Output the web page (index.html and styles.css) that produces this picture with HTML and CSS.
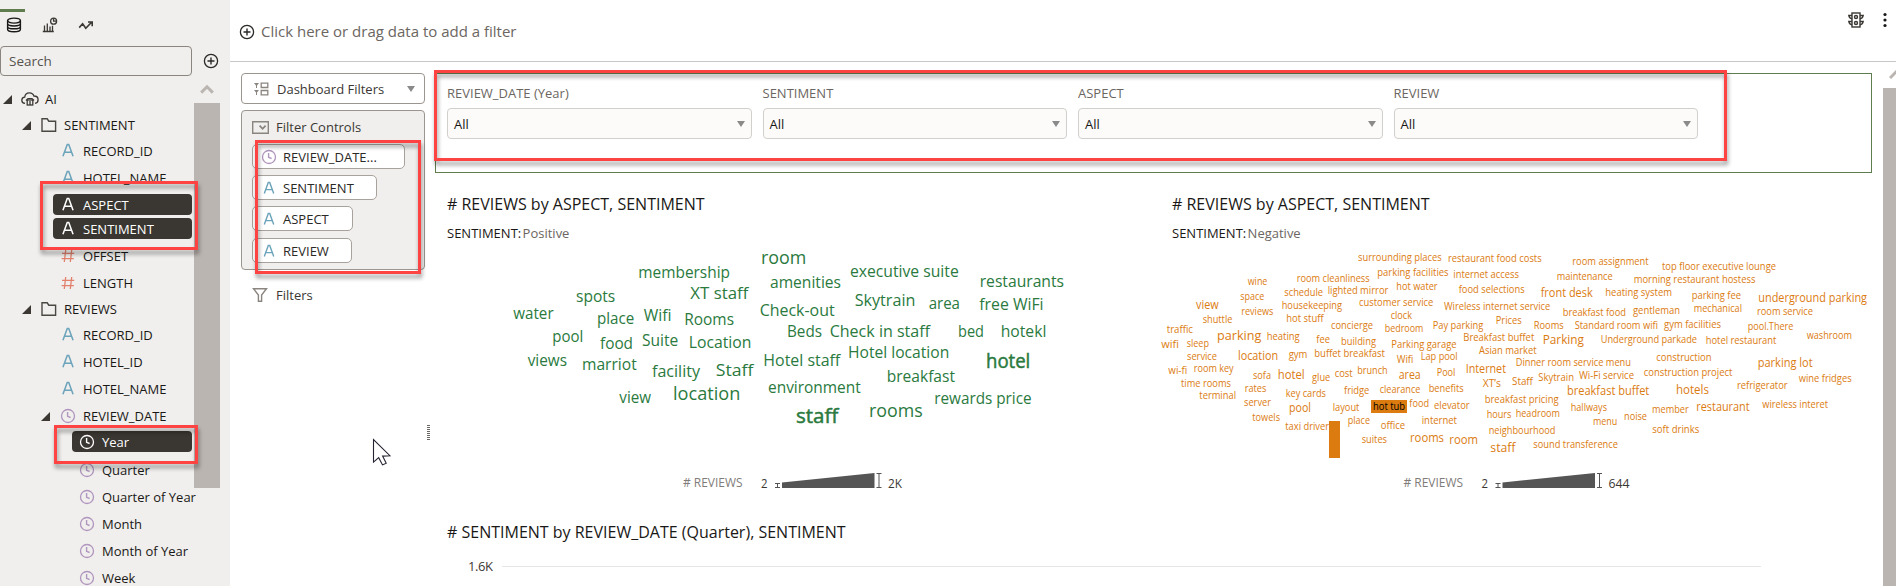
FILE: index.html
```
<!DOCTYPE html>
<html lang="en">
<head>
<meta charset="utf-8">
<title>Dashboard</title>
<link rel="stylesheet" href="styles.css">
</head>
<body>
<svg class="defs" width="0" height="0">
  <symbol id="text" viewBox="0 0 14 16"><path d="M1.6 14.2 6.2 1.6h1.6l4.6 12.6M3.6 9.8h6.8" fill="none" stroke="currentColor" stroke-width="1.6"/></symbol>
  <symbol id="hash" viewBox="0 0 14 14"><path d="M4.7 1 3.3 13M10.7 1 9.3 13M1 4.4h12.2M.6 9.6h12.2" fill="none" stroke="currentColor" stroke-width="1.3"/></symbol>
  <symbol id="clock" viewBox="0 0 16 16"><circle cx="8" cy="8" r="6.5" fill="none" stroke="currentColor" stroke-width="1.3"/><path d="M7.6 4v4.3l3 1.2" fill="none" stroke="currentColor" stroke-width="1.4"/></symbol>
  <symbol id="folder" viewBox="0 0 16 16"><path d="M1 14.2V1.8h5.2l1.6 2.4H14.6v10z" fill="none" stroke="currentColor" stroke-width="1.4"/></symbol>
  <symbol id="plus" viewBox="0 0 16 16"><circle cx="8" cy="8" r="6.6" fill="none" stroke="currentColor" stroke-width="1.3"/><path d="M8 4.5v7M4.5 8h7" stroke="currentColor" stroke-width="1.4"/></symbol>
  <symbol id="open" viewBox="0 0 9 9"><path d="M9 0v9H0z" fill="currentColor"/></symbol>
</svg>

<div class="app">
  <aside class="side">
    <div class="tabs">
      <svg width="16" height="16" viewBox="0 0 16 16" fill="none" stroke="#1a1816" stroke-width="1.4"><ellipse cx="8" cy="3.6" rx="6.4" ry="2.5"/><path d="M1.6 3.6v8.6c0 1.4 2.8 2.5 6.4 2.5s6.4-1.1 6.4-2.5V3.6M1.6 6.6c0 1.3 2.8 2.4 6.4 2.4s6.4-1.1 6.4-2.4M1.6 9.4c0 1.3 2.8 2.4 6.4 2.4s6.4-1.1 6.4-2.4"/></svg>
      <svg width="16" height="16" viewBox="0 0 16 16" fill="none" stroke="#3b3834" stroke-width="1.3"><path d="M.8 14.5h11M2.5 14V8.6M5.3 14V6.4M8 14V9.6M10.5 14V8.8"/><circle cx="11.6" cy="4.2" r="3"/><path d="M11.6 1.5v2.7h2.7"/></svg>
      <svg width="16" height="16" viewBox="0 0 16 16" fill="none" stroke="#3b3834" stroke-width="1.6"><path d="M1.2 10.6 4.6 6.8l3.2 4.4 6-6.2M10 5h4.2v4.2"/></svg>
    </div>
    <div class="searchrow"><div class="search">Search</div><svg class="plus" width="16" height="16"><use href="#plus"/></svg></div>
    <div class="treewrap">
      <ul class="tree">
        <li class="r l0"><svg class="tri"><use href="#open"/></svg><svg class="cloud" width="18" height="14" viewBox="0 0 18 14" fill="none" stroke="#3b3834" stroke-width="1.3"><path d="M4 11.4C1.9 11.2.8 9.9.8 8.200C.8 6.600 2 5.300 3.700 5.200 4 2.600 6 .900 8.400.9c2.200 0 3.900 1.200 4.500 3.100 2.500 0 4.200 1.700 4.200 3.800 0 1.900-1.200 3.300-3.100 3.600"/><rect x="6.200" y="8" width="5.600" height="5" /><path d="M5 8.500 7 6.600h4l2 1.900M9 9v4" /></svg><span>AI</span></li>
        <li class="r l1"><svg class="tri"><use href="#open"/></svg><svg class="ic"><use href="#folder"/></svg><span>SENTIMENT</span></li>
        <li class="r l2 a"><svg class="ic"><use href="#text"/></svg><span>RECORD_ID</span></li>
        <li class="r l2 a"><svg class="ic"><use href="#text"/></svg><span>HOTEL_NAME</span></li>
        <li class="r l2 a on"><svg class="ic"><use href="#text"/></svg><span>ASPECT</span></li>
        <li class="r l2 a on"><svg class="ic"><use href="#text"/></svg><span>SENTIMENT</span></li>
        <li class="r l2 n"><svg class="ic"><use href="#hash"/></svg><span>OFFSET</span></li>
        <li class="r l2 n"><svg class="ic"><use href="#hash"/></svg><span>LENGTH</span></li>
        <li class="r l1"><svg class="tri"><use href="#open"/></svg><svg class="ic"><use href="#folder"/></svg><span>REVIEWS</span></li>
        <li class="r l2 a"><svg class="ic"><use href="#text"/></svg><span>RECORD_ID</span></li>
        <li class="r l2 a"><svg class="ic"><use href="#text"/></svg><span>HOTEL_ID</span></li>
        <li class="r l2 a"><svg class="ic"><use href="#text"/></svg><span>HOTEL_NAME</span></li>
        <li class="r l2 d parent"><svg class="tri"><use href="#open"/></svg><svg class="ic"><use href="#clock"/></svg><span>REVIEW_DATE</span></li>
        <li class="r l3 d on"><svg class="ic"><use href="#clock"/></svg><span>Year</span></li>
        <li class="r l3 d"><svg class="ic"><use href="#clock"/></svg><span>Quarter</span></li>
        <li class="r l3 d"><svg class="ic"><use href="#clock"/></svg><span>Quarter of Year</span></li>
        <li class="r l3 d"><svg class="ic"><use href="#clock"/></svg><span>Month</span></li>
        <li class="r l3 d"><svg class="ic"><use href="#clock"/></svg><span>Month of Year</span></li>
        <li class="r l3 d"><svg class="ic"><use href="#clock"/></svg><span>Week</span></li>
      </ul>
      <div class="sbar"><svg width="14" height="10" viewBox="0 0 14 10"><path d="M1.200 8.600 7 2.800l5.800 5.800" fill="none" stroke="#bbb5b1" stroke-width="3"/></svg><div class="thumb"></div></div>
    </div>
  </aside>

  <main class="main">
    <header class="bar">
      <svg class="plus" width="16" height="16"><use href="#plus"/></svg><span class="hint">Click here or drag data to add a filter</span>
      <svg class="light" width="16" height="16" viewBox="0 0 16 16" fill="none" stroke="#3b3834" stroke-width="1.400"><rect x="4" y="1" width="8" height="14"/><circle cx="8" cy="5" r="1.500"/><circle cx="8" cy="11" r="1.500"/><path d="M4 3.500H.8c.3 2 1.400 3 3.200 3.200M4 9.500H.8c.3 2 1.400 3 3.200 3.200M12 3.500h3.200c-.3 2-1.400 3-3.200 3.200M12 9.500h3.200c-.3 2-1.400 3-3.200 3.200"/></svg>
      <svg class="dots" width="4" height="16" viewBox="0 0 4 16" fill="#1a1816"><circle cx="2" cy="2.500" r="1.600"/><circle cx="2" cy="8" r="1.600"/><circle cx="2" cy="13.500" r="1.600"/></svg>
    </header>
    <div class="body">
      <section class="panel">
        <div class="drop"><svg width="15" height="14" viewBox="0 0 15 14"><path d="M0 1h5L3 3.600V6H2V3.600zM0 8h5L3 10.600V13H2V10.600z" fill="#8b8580"/><path d="M7.200 1.200h6.600v4.300H7.200zM7.200 8.500h6.600v4.300H7.200z" fill="none" stroke="#8b8580" stroke-width="1.300"/></svg><span>Dashboard Filters</span><i class="caret"></i></div>
        <div class="group">
          <div class="ghead"><svg width="17" height="13" viewBox="0 0 17 13" fill="none" stroke="#8b8580"><path d="M.7.7h15.600v11.600H.7z" stroke-width="1.400"/><path d="m7.600 4.600 3 3.200 3-3.200" stroke-width="1.800"/></svg><span>Filter Controls</span></div>
          <div class="chip c1 d"><svg class="ic"><use href="#clock"/></svg><span>REVIEW_DATE...</span></div>
          <div class="chip c2 a"><svg class="ic"><use href="#text"/></svg><span>SENTIMENT</span></div>
          <div class="chip c3 a"><svg class="ic"><use href="#text"/></svg><span>ASPECT</span></div>
          <div class="chip c4 a"><svg class="ic"><use href="#text"/></svg><span>REVIEW</span></div>
        </div>
        <div class="ghead filters"><svg width="16" height="16" viewBox="0 0 16 16"><path d="M1.500 1.700h13L9.600 8v6.300H6.400V8z" fill="none" stroke="#8b8580" stroke-width="1.400"/></svg><span>Filters</span></div>
      </section>
      <div class="handle"></div>
      <section class="canvas">
        <div class="controls">
          <div class="ctl"><label>REVIEW_DATE (Year)</label><div class="sel">All<i class="caret"></i></div></div>
          <div class="ctl"><label>SENTIMENT</label><div class="sel">All<i class="caret"></i></div></div>
          <div class="ctl"><label>ASPECT</label><div class="sel">All<i class="caret"></i></div></div>
          <div class="ctl"><label>REVIEW</label><div class="sel">All<i class="caret"></i></div></div>
        </div>
        <div class="charts">
          <div class="chart">
            <h2>Reviews</h2>
            <p>SENTIMENT: <em>Positive</em></p>
            <svg class="cloudmap pos" id="pos" width="725" height="244" viewBox="435 246 725 244"></svg>
          </div>
          <div class="chart neg">
            <h2>Reviews</h2>
            <p>SENTIMENT: <em>Negative</em></p>
            <svg class="cloudmap negc" id="neg" width="722" height="244" viewBox="1160 246 722 244"></svg>
          </div>
        </div>
        <div class="line">
          <h2 class="long"># SENTIMENT by REVIEW_DATE (Quarter), SENTIMENT</h2>
          <div class="axis"><span>1.6K</span><i></i></div>
        </div>
      </section>
      <div class="vbar"><svg width="8" height="10" viewBox="0 0 8 10"><path d="M1 9 8 2" fill="none" stroke="#bbb5b1" stroke-width="3"/></svg><div class="vthumb"></div></div>
    </div>
  </main>
</div>

<div class="mark m1"></div>
<div class="mark m2"></div>
<div class="mark m3"></div>
<div class="mark m4"></div>
<svg class="cursor" width="20" height="29" viewBox="0 0 20 29"><path d="M1.500 1.500v22.600l5.200-4.400 3.800 7.200 3.700-1.600-3.600-7.200 7.300-.4z" fill="#fff" stroke="#222230" stroke-width="1.100"/></svg>
<script src="cloud.js"></script>
</body>
</html>
```
FILE: styles.css
```
* { box-sizing: border-box; }
body { margin: 0; font: 13px/18px "Open Sans", "Noto Sans", sans-serif; font-stretch: 97%; color: #1a1816; background: #fff; width: 1896px; height: 586px; overflow: hidden; position: relative; }
.defs { position: absolute; }
.app { display: flex; height: 586px; }
svg { flex: none; display: block; }

.side { width: 230px; background: #f0efed; flex: none; overflow: hidden; }
.tabs { height: 37px; margin-top: 9px; padding: 8px 0 0 6px; display: flex; gap: 20px; position: relative; }
.tabs::before { content: ""; position: absolute; left: 0; top: 0; width: 25px; height: 3px; background: #5f7d4f; }
.searchrow { display: flex; align-items: center; gap: 11px; }
.search { width: 192px; height: 30px; border: 1px solid #8b8580; border-radius: 4px; padding: 5px 8px; line-height: 19px; color: #55524e; font-size: 13.5px; }
.plus { color: #2b2926; }
.treewrap { display: flex; height: 510px; }
.tree { list-style: none; margin: 0; padding: 10px 0 0; width: 194px; flex: none; }
.r { height: 27px; display: flex; align-items: center; white-space: nowrap; }
.r span { font-stretch: 100%; }
.tri { width: 9px; height: 9px; color: #3b3834; }
.l0 { padding-left: 3px; height: 26px; }
.l0 .cloud { margin: 0 6px 0 9px; }
.l1 { padding-left: 22px; height: 25px; }
.l1 .ic { width: 16px; height: 16px; margin: 0 7px 0 10px; color: #4b4844; }
.l1 .tri, .parent .tri { margin-top: 1px; }
.l2 { padding-left: 61px; }
.l2 .ic { width: 14px; height: 14px; margin-right: 8px; }
.a .ic { color: #6ba3ba; height: 15px; }
.n .ic { color: #e2806d; }
.d .ic { color: #b095be; }
.parent { padding-left: 41px; }
.parent .ic { width: 16px; height: 16px; margin: 0 7px 0 10px; }
.l3 { padding-left: 79px; }
.l3 .ic { width: 16px; height: 16px; margin-right: 7px; }
.on { height: 21px; margin: 3px 2px 3px 53px; padding-left: 8px; background: #3a3631; color: #fff; border-radius: 4px; }
.l3.on { margin-left: 72px; padding-left: 7px; margin-top: 2px; margin-bottom: 4px; }
.on .ic { color: #fff; }
.sbar { width: 26px; padding-top: 8px; }
.sbar svg { margin: 0 0 9px 6px; }
.thumb { width: 26px; height: 385px; background: #bbb5b1; }

.main { flex: 1; min-width: 0; }
.bar { height: 62px; border-bottom: 1px solid #c9c7c5; display: flex; padding-left: 9px; }
.bar .plus { margin-top: 24px; }
.hint { margin: 21px auto 0 6px; font-size: 15px; line-height: 20px; color: #6b6661; white-space: nowrap; }
.light { margin: 12px 19px 0 0; }
.dots { margin: 12px 9px 0 0; }
.body { display: flex; height: 524px; }
.panel { width: 184px; margin: 11px 0 0 11px; flex: none; color: #3b3834; }
.drop { height: 31px; border: 1px solid #9b9590; border-radius: 4px; display: flex; align-items: center; padding: 0 9px 0 12px; gap: 8px; white-space: nowrap; }
.drop span { margin-right: auto; }
.caret { width: 0; height: 0; border: 4.5px solid transparent; border-top: 6px solid #8a8a8a; border-bottom: 0; }
.group { height: 160px; margin-top: 6px; border: 1px solid #9b9590; border-radius: 4px; background: #f0efed; padding: 7px 0 0 10px; }
.ghead { display: flex; align-items: center; gap: 7px; height: 18px; white-space: nowrap; }
.chip { height: 25px; margin-top: 7px; background: #fff; border: 1px solid #a8a29d; border-radius: 5px; display: flex; align-items: center; gap: 7px; padding-left: 9px; color: #2b2926; white-space: nowrap; }
.chip span { font-stretch: 100%; }
.chip .ic { width: 14px; height: 14px; }
.chip.d { padding-left: 8px; }
.chip.d .ic { width: 16px; height: 16px; margin-right: -1px; }
.c1 { width: 153px; margin-top: 8px; }
.c1 + .chip { margin-top: 6px; }
.c2 { width: 125px; }
.c3 { width: 101px; margin-top: 6px; }
.c4 { width: 100px; }
.filters { margin: 16px 0 0 11px; gap: 8px; }
.handle { width: 3px; height: 16px; margin: 363px 0 0 2px; flex: none; background: repeating-linear-gradient(#6b6661 0 1px, #fff 1px 2px); }

.canvas { width: 1443px; margin-left: 5px; flex: none; }
.controls { width: 1437px; height: 100px; margin-top: 11px; border: 1px solid #5f7d4f; display: flex; gap: 11px; padding: 10px 0 0 11px; }
.ctl { width: 304.500px; }
.ctl label { display: block; height: 18px; color: #6b6661; }
.sel { margin-top: 6px; height: 31px; border: 1px solid #d2d0cd; border-radius: 4px; background: #fcfbfa; padding: 0 6px; display: flex; align-items: center; justify-content: space-between; }
.charts { display: flex; height: 317px; }
.chart { width: 725px; padding-top: 20px; }
h2 { margin: 0 0 0 12px; font-size: 16px; line-height: 22px; font-weight: 400; font-stretch: 94.500%; white-space: nowrap; }
.chart p { margin: 8px 0 0 12px; font-size: 13px; line-height: 20px; }
.chart em { font-style: normal; color: #6b6661; margin-left: -2px; }
.cloudmap { margin-top: 3px; overflow: visible; }
.cloudmap text { font-family: "Open Sans", "Noto Sans", sans-serif; font-stretch: 96%; }
.pos text { fill: #2a7a3e; }
.negc text { fill: #db7b10; }
.cloudmap .strong { stroke: #2a7a3e; stroke-width: .5; }
.cloudmap .picked { fill: #000; }
.cloudmap .cap { fill: #7f7c79; }
.cloudmap .num { fill: #3b3834; }
.line { padding-top: 31px; }
.axis { display: flex; align-items: center; margin: 13px 0 0 33px; height: 20px; }
.axis span { width: 34px; letter-spacing: -.4px; color: #3b3834; }
.axis i { width: 1259px; height: 1px; background: #e6e6e6; }
.vbar { width: 13px; margin: 7px 0 0 5px; overflow: hidden; flex: none; }
.vbar svg { margin: 0 0 9px 6px; }
.vthumb { height: 498px; background: #bbb5b1; }

.mark { position: absolute; border: 3px solid #fe4443; filter: drop-shadow(1px 4px 2px rgba(0, 0, 0, .4)); }
.m1 { left: 40px; top: 181px; width: 158px; height: 69px; }
.m2 { left: 54px; top: 425px; width: 144px; height: 39px; }
.m3 { left: 255px; top: 140px; width: 166px; height: 134px; }
.m4 { left: 434px; top: 70px; width: 1293px; height: 91px; }
.cursor { position: absolute; left: 372px; top: 438px; }
```
FILE: cloud.js
```
const NS = "http://www.w3.org/2000/svg";
document.querySelectorAll(".chart h2").forEach(h => { h.textContent = "# REVIEWS by ASPECT, SENTIMENT"; });

function add(svg, tag, attrs, label) {
  const el = document.createElementNS(NS, tag);
  for (const k in attrs) el.setAttribute(k, attrs[k]);
  if (label) el.textContent = label;
  svg.append(el);
}
// Each word is [label, left, right, baseline, size]; positions are thirds of a pixel from the origin.
function words(svg, ox, oy, base, list) {
  for (const [label, l, r, y, size, cls] of list) {
    add(svg, "text", { x: (ox + l / 3).toFixed(1), y: (oy + y / 3).toFixed(1), textLength: ((r - l) / 3).toFixed(1),
      lengthAdjust: "spacingAndGlyphs", "font-size": size || base, class: cls || "word" }, label);
  }
}
function legend(svg, x, max, w) {
  const t = (label, px, len, cls) => add(svg, "text", { x: px, y: cls === "cap" ? 487 : 488, textLength: len, lengthAdjust: "spacingAndGlyphs", "font-size": 13, class: cls }, label);
  t("# REVIEWS", x, 59.5, "cap");
  t("2", x + 78, 6.5, "num");
  t(max, x + 205, w, "num");
  add(svg, "path", { d: `M${x + 99} 488V477.500L${x + 191.500} 473V488z`.replace("477.500", "482.5"), fill: "#555" });
  add(svg, "path", { d: `M${x + 92} 483.5h5m-5 4h5m-2.500-4v4M${x + 193.500} 473.500h5m-5 14h5m-2.500-14v14`, fill: "none", stroke: "#555", "stroke-width": 1 });
}

const pos = document.getElementById("pos");
const neg = document.getElementById("neg");

words(pos, 430, 180, 16.5, [
  ["membership", 625, 900, 295], ["XT staff", 781, 955, 357], ["spots", 438, 556, 366], ["water", 250, 371, 417],
  ["place", 501, 613, 432], ["Wifi", 641, 724, 423], ["Rooms", 763, 912, 434], ["pool", 367, 460, 486],
  ["food", 510, 609, 506], ["Suite", 636, 745, 498], ["Location", 776, 964, 504], ["views", 293, 411, 558],
  ["marriot", 456, 620, 570], ["facility", 666, 810, 591], ["Staff", 857, 970, 588], ["view", 568, 663, 669],
  ["location", 729, 931, 660, 18.5]
]);
words(pos, 770, 180, 16.5, [
  ["room", -27, 109, 252, 18.5], ["amenities", 0, 213, 324], ["executive suite", 240, 566, 291], ["restaurants", 629, 882, 321],
  ["Skytrain", 254, 436, 378], ["area", 476, 570, 387], ["free WiFi", 628, 821, 390], ["Check-out", -31, 194, 408],
  ["Beds", 51, 156, 471], ["Check in staff", 179, 480, 471], ["bed", 564, 642, 471], ["hotekl", 692, 829, 471],
  ["Hotel location", 234, 538, 534], ["Hotel staff", -20, 211, 558], ["hotel", 648, 781, 564, 20, "strong"],
  ["breakfast", 350, 555, 606], ["environment", -6, 272, 639], ["rewards price", 493, 785, 672],
  ["rooms", 297, 458, 711, 18.5], ["staff", 78, 205, 729, 20, "strong"]
]);

add(neg, "rect", { x: 1371, y: 400, width: 36, height: 13, fill: "#db7b10" });
add(neg, "rect", { x: 1329, y: 421, width: 11, height: 37, fill: "#db7b10" });
words(neg, 1140, 180, 10, [
  ["surrounding places", 654, 905, 243], ["wine", 323, 382, 315], ["room cleanliness", 470, 689, 306], ["parking facilities", 712, 926, 288],
  ["space", 301, 373, 360], ["schedule", 433, 549, 348], ["lighted mirror", 563, 745, 342], ["view", 168, 236, 387, 12],
  ["reviews", 304, 400, 405], ["housekeeping", 425, 606, 387], ["customer service", 657, 880, 378], ["shuttle", 188, 277, 429],
  ["hot stuff", 439, 551, 426], ["traffic", 80, 159, 459], ["concierge", 573, 699, 447], ["parking", 231, 364, 480, 13.5],
  ["heating", 380, 479, 480], ["fee", 529, 570, 489], ["building", 603, 708, 495], ["wifi", 64, 117, 504, 11.5],
  ["sleep", 140, 207, 501], ["service", 141, 231, 540], ["location", 294, 414, 540, 12.5], ["gym", 446, 502, 534],
  ["buffet breakfast", 523, 735, 531], ["wi-fi", 85, 142, 582], ["room key", 161, 281, 577], ["sofa", 339, 393, 597],
  ["hotel", 413, 494, 598, 13.5], ["glue", 516, 571, 603], ["cost", 584, 638, 591], ["brunch", 652, 743, 582],
  ["time rooms", 123, 273, 621], ["rates", 314, 379, 636], ["terminal", 178, 288, 657], ["key cards", 437, 558, 651],
  ["fridge", 612, 688, 642], ["server", 312, 393, 678], ["pool", 447, 513, 696, 12.5], ["layout", 578, 658, 693],
  ["hot tub", 699, 795, 690, 10, "picked"], ["towels", 337, 420, 723], ["taxi driver", 436, 567, 750], ["place", 623, 690, 732],
  ["suites", 665, 741, 789]
]);
words(neg, 1380, 180, 10, [
  ["restaurant food costs", 204, 485, 246], ["internet access", 220, 417, 294], ["room assignment", 577, 806, 255],
  ["maintenance", 530, 698, 300], ["hot water", 49, 173, 330], ["food selections", 236, 434, 339], ["front desk", 482, 638, 351, 12],
  ["heating system", 676, 876, 348], ["Wireless internet service", 192, 511, 390], ["breakfast food", 548, 738, 408],
  ["clock", 32, 96, 417], ["bedroom", 14, 130, 456], ["Pay parking", 158, 310, 447], ["Prices", 347, 425, 432],
  ["Rooms", 461, 551, 447], ["Standard room wifi", 584, 834, 447], ["Breakfast buffet", 250, 463, 483], ["Parking", 488, 612, 492, 13],
  ["Underground parkade", 662, 951, 489], ["Parking garage", 34, 230, 504], ["Asian market", 297, 470, 522], ["Wifi", 50, 100, 549],
  ["Lap pool", 122, 233, 540], ["Dinner room service menu", 407, 753, 558], ["area", 56, 122, 597, 12], ["Pool", 170, 226, 588],
  ["Internet", 257, 378, 579, 12], ["XT\u2019s", 308, 363, 621], ["Staff", 396, 459, 615], ["Skytrain", 475, 582, 603],
  ["Wi-Fi service", 597, 762, 597], ["clearance", -1, 121, 639], ["benefits", 146, 251, 636], ["breakfast buffet", 561, 808, 645, 12],
  ["food", 88, 147, 681], ["elevator", 162, 269, 687], ["breakfast pricing", 314, 536, 669], ["hallways", 572, 681, 693],
  ["internet", 125, 231, 732], ["hours", 320, 394, 714], ["headroom", 407, 540, 711], ["noise", 732, 801, 720],
  ["menu", 639, 712, 735], ["office", 2, 75, 747], ["neighbourhood", 326, 526, 762], ["rooms", 90, 192, 786, 12],
  ["room", 208, 294, 792, 12], ["staff", 331, 407, 816, 13], ["sound transference", 460, 714, 804]
]);
words(neg, 1620, 180, 10, [
  ["top floor executive lounge", 126, 468, 270], ["morning restaurant hostess", 41, 406, 309], ["parking fee", 215, 363, 357],
  ["underground parking", 415, 741, 366, 12], ["gentleman", 39, 180, 402], ["mechanical", 221, 366, 396], ["room service", 411, 579, 405],
  ["gym facilities", 132, 303, 444], ["pool.There", 383, 520, 450], ["washroom", 560, 696, 477], ["hotel restaurant", 257, 469, 492],
  ["construction", 109, 275, 543], ["parking lot", 413, 578, 561, 12], ["construction project", 71, 337, 588], ["wine fridges", 536, 695, 606],
  ["refrigerator", 351, 503, 627], ["hotels", 168, 267, 642, 12.5], ["member", 96, 206, 699], ["restaurant", 229, 389, 693, 12],
  ["wireless interet", 427, 624, 684], ["soft drinks", 97, 238, 759]
]);

legend(pos, 683, "2K", 14);
legend(neg, 1403.5, "644", 21);
```
